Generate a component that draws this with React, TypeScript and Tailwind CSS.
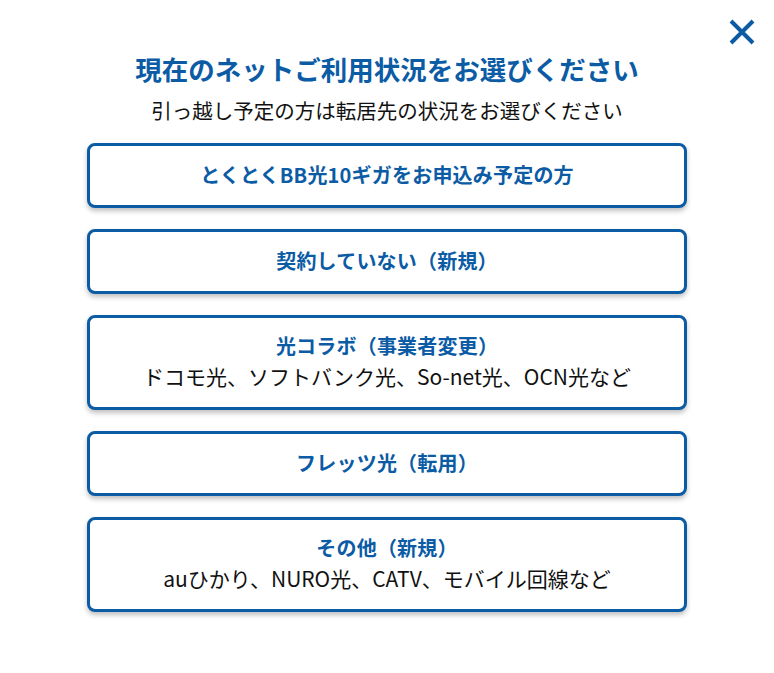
const options = [
  { title: "とくとくBB光10ギガをお申込み予定の方" },
  { title: "契約していない（新規）" },
  { title: "光コラボ（事業者変更）", sub: "ドコモ光、ソフトバンク光、So-net光、OCN光など" },
  { title: "フレッツ光（転用）" },
  { title: "その他（新規）", sub: "auひかり、NURO光、CATV、モバイル回線など" },
];

export default function App() {
  return (
    <div
      className="relative w-[774px] h-[673px] bg-white"
      style={{ fontFamily: '"Noto Sans CJK JP", "Noto Sans", sans-serif' }}
    >
      {/* 閉じるボタン */}
      <button className="absolute right-[19px] top-[19px] w-[26px] h-[26px] text-[#0b5ba5]">
        <svg viewBox="0 0 26 26" className="w-full h-full">
          <path d="M2 2 L24 24 M24 2 L2 24" stroke="currentColor" strokeWidth="4" />
        </svg>
      </button>

      <div className="flex flex-col items-center pt-[50px]">
        <h1 className="text-[26.5px] leading-[38px] font-bold text-[#0b5ba5]">
          現在のネットご利用状況をお選びください
        </h1>
        <p className="mt-[7px] text-[20.5px] leading-[30px] text-[#111]">
          引っ越し予定の方は転居先の状況をお選びください
        </p>

        <div className="mt-[18px] flex flex-col gap-[21px] w-[600px]">
          {options.map((o) => (
            <button
              key={o.title}
              className={`flex flex-col items-center justify-center pb-[3px] border-[3px] border-[#0b5ba5] rounded-[8px] bg-white shadow-[0_3px_5px_rgba(0,0,0,0.25)] ${
                o.sub ? "h-[95px]" : "h-[65px]"
              }`}
            >
              <span className="text-[20px] leading-[31px] font-bold tracking-[0.01em] text-[#0b5ba5]">{o.title}</span>
              {o.sub && (
                <span className="text-[21px] leading-[31px] text-[#111]">{o.sub}</span>
              )}
            </button>
          ))}
        </div>
      </div>
    </div>
  );
}
